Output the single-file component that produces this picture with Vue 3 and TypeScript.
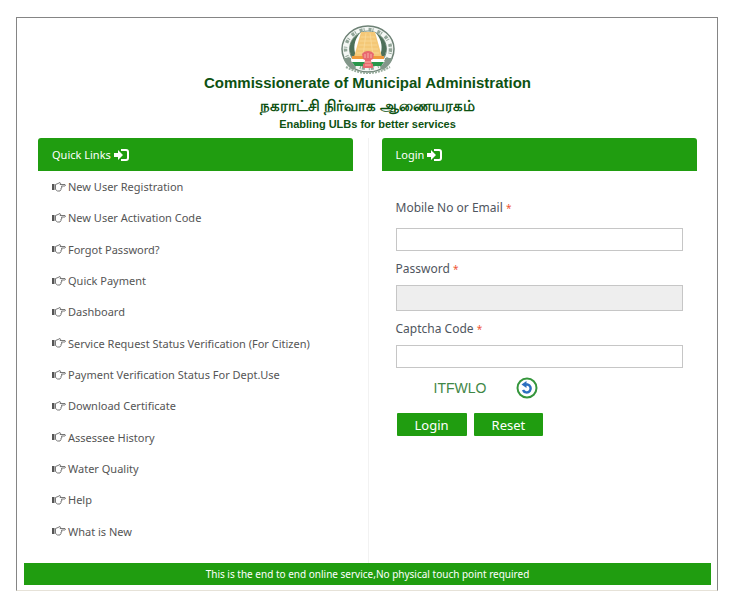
<script setup lang="ts">
import { ref } from 'vue'

const links: string[] = [
  'New User Registration',
  'New User Activation Code',
  'Forgot Password?',
  'Quick Payment',
  'Dashboard',
  'Service Request Status Verification (For Citizen)',
  'Payment Verification Status For Dept.Use',
  'Download Certificate',
  'Assessee History',
  'Water Quality',
  'Help',
  'What is New',
]

const user = ref('')
const password = ref('')
const captcha = ref('')
</script>

<template>
  <div class="frame">
    <header class="masthead">
      <svg class="emblem" viewBox="0 0 54 50" aria-hidden="true">
        <ellipse cx="27" cy="24" rx="26" ry="23" fill="#f4f7f4" stroke="#6d8175" stroke-width="1.500" />
        <ellipse cx="27" cy="24" rx="22.500" ry="19.500" fill="none" stroke="#93a699" stroke-width="3.500" stroke-dasharray="3 1 1 4" />
        <ellipse cx="27" cy="24" rx="18.500" ry="18" fill="#fff" stroke="#7d9385" stroke-width="1" />
        <path d="M19 8C8 14 6 25 12 34l3-3c-3-8-2-16 4-23zM35 8c11 6 13 17 7 26l-3-3c3-8 2-16-4-23z" fill="#4d7059" />
        <path d="M20 7h14l7 25H13z" fill="#f4c877" />
        <path d="M20 12h14M19 16h16M18 20h18M17 24h20M16 28h22M25 8l-3 23M29 8l3 23" stroke="#f9dc9f" stroke-width=".7" fill="none" />
        <path d="M11 31h32v3H11z" fill="#ef9b3c" />
        <path d="M11 34h32v3H11z" fill="#fff" />
        <path d="M11 37h32l-3 4H14z" fill="#27964a" />
        <path d="M2 33h8v3l5 7-3 2Q5 41 2 33zM52 33h-8v3l-5 7 3 2q7-4 10-12z" fill="#83978a" />
        <path d="M21 29q2-3 6-3t6 3l-1 5-2 1v3l2 1v4H22v-4l2-1v-3l-2-1z" fill="#e8686f" />
        <path d="M24 29v4m3-5v5m3-4v4M23 37h8M24 40h6" stroke="#f7b3a8" fill="none" />
        <path d="M5 42q22 12 44 0" fill="none" stroke="#9aae9f" stroke-width="2" stroke-dasharray="2 1" />
      </svg>
      <h1>Commissionerate of Municipal Administration</h1>
      <p class="tamil" lang="ta">நகராட்சி நிர்வாக ஆணையரகம்</p>
      <p class="tagline">Enabling ULBs for better services</p>
    </header>

    <main class="columns">
      <section class="column">
        <h2 class="bar">
          Quick Links
          <svg class="enter" viewBox="0 0 15 12" aria-hidden="true">
            <path d="M0 4h4V1l5 5-5 5V8H0z" fill="currentColor" />
            <path d="M7 1h5q2 0 2 2v6q0 2-2 2H7" fill="none" stroke="currentColor" stroke-width="2" />
          </svg>
        </h2>
        <ul class="links">
          <li v-for="link in links" :key="link">
            <a href="#">
              <svg class="hand" viewBox="0 0 14 10" aria-hidden="true">
                <path d="M0 2h2.500v6H0z" fill="currentColor" />
                <path d="M3.500 7.500v-5L6 1.500l2-1q1.200.5 0 2h5q1 1 0 1.500H9.500l.5 1.500-1 .5v1.500L8 9H5.500z" fill="none" stroke="currentColor" stroke-width=".8" />
              </svg>
              {{ link }}
            </a>
          </li>
        </ul>
      </section>

      <section class="column">
        <h2 class="bar">
          Login
          <svg class="enter" viewBox="0 0 15 12" aria-hidden="true">
            <path d="M0 4h4V1l5 5-5 5V8H0z" fill="currentColor" />
            <path d="M7 1h5q2 0 2 2v6q0 2-2 2H7" fill="none" stroke="currentColor" stroke-width="2" />
          </svg>
        </h2>
        <form class="login" @submit.prevent>
          <label class="lead" for="user">Mobile No or Email <span class="required">*</span></label>
          <input id="user" v-model="user" type="text" />
          <label for="password">Password <span class="required">*</span></label>
          <input id="password" v-model="password" type="password" disabled />
          <label for="captcha">Captcha Code <span class="required">*</span></label>
          <input id="captcha" v-model="captcha" type="text" />
          <div class="challenge">
            <span>ITFWLO</span>
            <button class="refresh" type="button" aria-label="Refresh captcha">
              <svg viewBox="0 0 22 22" aria-hidden="true">
                <circle cx="11" cy="11" r="9.500" fill="#fff" stroke="#35963c" stroke-width="2" />
                <path d="M8.500 7.500h3a4 4 0 1 1-4.500 5.500" fill="none" stroke="#2c6fc0" stroke-width="2.500" />
                <path d="M5.500 7.500L10.500 4v7z" fill="#2c6fc0" />
              </svg>
            </button>
          </div>
          <div class="actions">
            <button type="submit">Login</button>
            <button type="reset">Reset</button>
          </div>
        </form>
      </section>
    </main>

    <footer class="notice">This is the end to end online service,No physical touch point required</footer>
  </div>
</template>

<style>
body {
  background: #fff;
}
</style>

<style scoped>
.frame {
  box-sizing: border-box;
  display: flex;
  flex-direction: column;
  min-height: calc(100vh - 17px);
  margin: 17px 12px 0 16px;
  padding: 7px 6px 5px 7px;
  border: 1px solid #858585;
  border-bottom-color: #e6e2d8;
  font-family: "Noto Sans", "Open Sans", sans-serif;
  font-size: 11px;
  color: #555;
}
h1,
h2,
p,
ul {
  margin: 0;
  padding: 0;
}
.masthead {
  display: flex;
  flex-direction: column;
  align-items: center;
  padding-bottom: 6px;
  font-family: "Liberation Sans", sans-serif;
  color: #0e5212;
}
.emblem {
  width: 54px;
  height: 50px;
}
h1 {
  font-size: 15px;
  line-height: 16px;
}
.tamil {
  padding-top: 4px;
  font-size: 15px;
  line-height: 22px;
  font-weight: bold;
}
.tagline {
  font-size: 11px;
  line-height: 15px;
  font-weight: bold;
}
.columns {
  display: grid;
  flex: 1;
  grid-template-columns: 1fr 1fr;
}
.column {
  display: flex;
  flex-direction: column;
  padding: 0 15px 0 14px;
}
.column + .column {
  padding: 0 14px 0 13px;
  border-left: 1px solid #f2f2f2;
}
.bar {
  display: flex;
  align-items: center;
  gap: 3px;
  height: 33px;
  padding: 0 14px;
  border-radius: 3px 3px 0 0;
  background: #209d10;
  color: #fff;
  font-size: 11px;
  font-weight: normal;
}
.enter {
  width: 15px;
  height: 12px;
}
.links {
  display: grid;
  flex: 1;
  grid-auto-rows: 1fr;
  padding: 0 14px 16px;
  list-style: none;
}
.links li {
  display: flex;
  align-items: center;
}
.links a {
  display: flex;
  align-items: center;
  gap: 2px;
  color: inherit;
  text-decoration: none;
}
.hand {
  width: 14px;
  height: 10px;
}
.login {
  display: flex;
  flex-direction: column;
  padding: 28px 14px 0;
  font-size: 12px;
}
.login label {
  line-height: 18px;
  margin-bottom: 7px;
  color: #4f5660;
}
.login .lead {
  margin-bottom: 11px;
}
.required {
  color: #ee5636;
  font-size: 10px;
}
.login input {
  box-sizing: border-box;
  width: 100%;
  height: 23px;
  margin: 0 0 9px;
  padding: 0 6px;
  border: 1px solid #c6c6c6;
  background: #fff;
  font: inherit;
}
.login input:disabled {
  height: 26px;
  background: #eee;
}
.challenge {
  display: flex;
  align-items: center;
  gap: 30px;
  padding-left: 38px;
  font-family: "Liberation Sans", sans-serif;
  font-size: 14px;
  color: #3f8746;
}
.refresh {
  display: flex;
  padding: 0;
  border: 0;
  background: none;
}
.refresh svg {
  width: 22px;
  height: 22px;
}
.actions {
  display: flex;
  gap: 7px;
  padding: 14px 1px 0;
}
.actions button {
  height: 23px;
  padding: 0 18px;
  border: 0;
  border-radius: 1px;
  background: #209d10;
  color: #fff;
  font-family: inherit;
  font-size: 13px;
}
.notice {
  background: #209d10;
  color: #fff;
  font-size: 10px;
  line-height: 22px;
  text-align: center;
}
</style>
